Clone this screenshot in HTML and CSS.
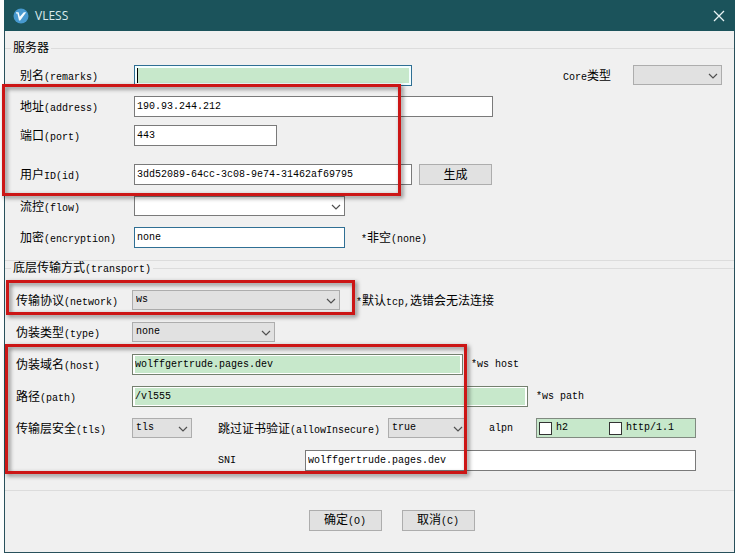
FILE: index.html
```html
<!DOCTYPE html>
<html lang="zh-CN">
<head>
<meta charset="utf-8">
<title>VLESS</title>
<link rel="stylesheet" href="styles.css">
</head>
<body>
<main class="window">
  <header class="titlebar">
    <svg class="logo" viewBox="0 0 16 16" aria-hidden="true">
      <circle cx="8" cy="8" r="7.500" fill="#4799cf"/>
      <path d="M3 4.200h2.600l1.200 4.500L10.800 4.200h2.400L7.200 12.500H6L4.400 5.600H3z" fill="#f4fbff"/>
    </svg>
    <h1 class="title">VLESS</h1>
    <button class="close" type="button" aria-label="关闭">
      <svg viewBox="0 0 12 12" aria-hidden="true"><path d="M1 1l10 10M11 1L1 11"/></svg>
    </button>
  </header>

  <form class="form">
    <fieldset class="group server">
      <legend>服务器</legend>
      <div class="row">
        <label class="name" for="remarks">别名<span class="en">(remarks)</span></label>
        <input class="box w-278 focused" id="remarks" type="text">
        <label class="core" for="core"><span class="en">Core</span>类型</label>
        <span class="pick w-89"><select id="core"><option></option></select><svg viewBox="0 0 10 6" aria-hidden="true"><path d="M1 1l4 4 4-4"/></svg></span>
      </div>
      <div class="row">
        <label class="name" for="address">地址<span class="en">(address)</span></label>
        <input class="box w-359" id="address" type="text" value="190.93.244.212">
      </div>
      <div class="row tight">
        <label class="name" for="port">端口<span class="en">(port)</span></label>
        <input class="box w-143" id="port" type="text" value="443">
      </div>
      <div class="row loose">
        <label class="name" for="uid">用户<span class="en">ID(id)</span></label>
        <input class="box w-278" id="uid" type="text" value="3dd52089-64cc-3c08-9e74-31462af69795">
        <button class="btn beside" type="button">生成</button>
      </div>
      <div class="row wide">
        <label class="name" for="flow">流控<span class="en">(flow)</span></label>
        <span class="pick white w-211"><select id="flow"><option></option></select><svg viewBox="0 0 10 6" aria-hidden="true"><path d="M1 1l4 4 4-4"/></svg></span>
      </div>
      <div class="row">
        <label class="name" for="encryption">加密<span class="en">(encryption)</span></label>
        <input class="box w-211 active" id="encryption" type="text" value="none">
        <span class="hint far"><span class="en">*</span>非空<span class="en">(none)</span></span>
      </div>
    </fieldset>

    <fieldset class="group transport">
      <legend>底层传输方式<span class="en">(transport)</span></legend>
      <div class="row">
        <label class="name" for="network">传输协议<span class="en">(network)</span></label>
        <span class="pick w-208"><select id="network"><option>ws</option></select><svg viewBox="0 0 10 6" aria-hidden="true"><path d="M1 1l4 4 4-4"/></svg></span>
        <span class="hint far"><span class="en">*</span>默认<span class="en">tcp,</span>选错会无法连接</span>
      </div>
      <div class="row">
        <label class="name" for="type">伪装类型<span class="en">(type)</span></label>
        <span class="pick w-143"><select id="type"><option>none</option></select><svg viewBox="0 0 10 6" aria-hidden="true"><path d="M1 1l4 4 4-4"/></svg></span>
      </div>
      <div class="row">
        <label class="name" for="host">伪装域名<span class="en">(host)</span></label>
        <input class="box green w-331" id="host" type="text" value="wolffgertrude.pages.dev">
        <span class="hint en">*ws host</span>
      </div>
      <div class="row">
        <label class="name" for="path">路径<span class="en">(path)</span></label>
        <input class="box green w-396" id="path" type="text" value="/vl555">
        <span class="hint en">*ws path</span>
      </div>
      <div class="row">
        <label class="name" for="tls">传输层安全<span class="en">(tls)</span></label>
        <span class="pick w-60"><select id="tls"><option>tls</option></select><svg viewBox="0 0 10 6" aria-hidden="true"><path d="M1 1l4 4 4-4"/></svg></span>
        <label class="insecure" for="insecure">跳过证书验证<span class="en">(allowInsecure)</span></label>
        <span class="pick w-79"><select id="insecure"><option>true</option></select><svg viewBox="0 0 10 6" aria-hidden="true"><path d="M1 1l4 4 4-4"/></svg></span>
        <span class="alpn en" id="alpn">alpn</span>
        <div class="checks" role="group" aria-labelledby="alpn">
          <label class="check en"><input type="checkbox">h2</label>
          <label class="check en"><input type="checkbox">http/1.1</label>
        </div>
      </div>
      <div class="row sni">
        <label class="sni-name en" for="sni">SNI</label>
        <input class="box w-391" id="sni" type="text" value="wolffgertrude.pages.dev">
      </div>
    </fieldset>

    <footer class="actions">
      <button class="btn" type="submit">确定<span class="en">(O)</span></button>
      <button class="btn" type="button">取消<span class="en">(C)</span></button>
    </footer>
  </form>

  <div class="mark mark-server"></div>
  <div class="mark mark-network"></div>
  <div class="mark mark-host"></div>
</main>
</body>
</html>
```
FILE: styles.css
```css
* {
  box-sizing: border-box;
}

body {
  margin: 0;
  background: #fcfdfd;
  color: #000;
  font: 12px/14px "Liberation Mono", "Noto Sans CJK SC", monospace;
}

input,
select,
button {
  margin: 0;
  border-radius: 0;
  color: #000;
  font: inherit;
}

/* Latin runs are half the width of a Chinese character */
.en,
.box,
.pick select {
  font-size: 10px;
}

.window {
  position: relative;
  display: flex;
  flex-direction: column;
  min-height: 100vh;
  margin-left: 4px;
  border: 1px solid #28505b;
  border-top: 0;
  background: #f0f0f0;
}

.titlebar {
  display: flex;
  align-items: center;
  height: 31px;
  margin: 0 -1px;
  padding: 0 10px 0 9px;
  background: #1b535b;
}

.logo {
  width: 16px;
  height: 16px;
}

.title {
  flex: 1;
  margin: 0 0 0 6px;
  color: #dcebed;
  font: 12px/16px "Open Sans", "Noto Sans", sans-serif;
}

.close {
  display: flex;
  padding: 0;
  border: 0;
  background: none;
}

.close svg {
  width: 12px;
  height: 12px;
  fill: none;
  stroke: #e8f3f4;
  stroke-width: 1.3;
}

.form {
  padding-top: 10px;
}

.group {
  min-width: 0;
  margin: 0;
  padding: 0 12px 12px;
  border: solid #dcdcdc;
  border-width: 1px 0;
}

.group legend {
  height: 14px;
  padding: 0 2px;
  line-height: 16px;
}

.server {
  padding-left: 15px;
}

.server legend {
  margin-left: -9px;
}

.transport {
  padding: 4px 12px 19px 11px;
}

.transport legend {
  margin-left: -5px;
}

.row {
  display: flex;
  align-items: center;
  height: 21px;
  margin-top: 10px;
  white-space: nowrap;
}

.tight {
  margin-top: 8px;
}

.loose {
  margin-top: 18px;
}

.wide,
.transport .row {
  margin-top: 11px;
}

.name {
  flex: none;
  width: 114px;
}

.name,
.core,
.insecure,
.far {
  padding-top: 3px;
}

.transport .name {
  width: 116px;
}

.box {
  height: 21px;
  padding: 1px 2px 2px;
  border: 1px solid #7a7a7a;
  outline: 0;
  background: #fff;
}

.active {
  border-color: #2f6f94;
}

/* Empty focused field: tinted text area with the caret at its start */
.focused {
  padding: 2px;
  border-color: #2f6f94;
  background:
    linear-gradient(#000, #000) left / 1px 100% no-repeat content-box,
    linear-gradient(#c7e8cb, #c7e8cb) content-box,
    #f4ffff;
}

.green {
  border-color: #74806f;
  background: linear-gradient(#c7e8cb, #c7e8cb) content-box, #fff;
  padding: 1px 2px;
}

.pick {
  position: relative;
  flex: none;
  align-self: flex-start;
  height: 20px;
}

.pick select {
  width: 100%;
  height: 100%;
  padding: 0 18px 0 3px;
  border: 1px solid #adadad;
  background: #e1e1e1;
  appearance: none;
}

.pick.white select {
  border-color: #7a7a7a;
  background: #fff;
}

.pick svg {
  position: absolute;
  top: 8px;
  right: 4px;
  width: 10px;
  height: 6px;
  fill: none;
  stroke: #505050;
  stroke-width: 1.2;
  pointer-events: none;
}

.w-60 { width: 60px; }
.w-79 { width: 79px; }
.w-89 { width: 89px; }
.w-143 { width: 143px; }
.w-208 { width: 208px; }
.w-211 { width: 211px; }
.w-278 { width: 278px; }
.w-331 { width: 331px; }
.w-359 { width: 359px; }
.w-391 { width: 391px; }
.w-396 { width: 396px; }

.core {
  margin: 0 22px 0 auto;
}

.hint {
  margin-left: 8px;
}

.far {
  margin-left: 16px;
}

.insecure {
  width: 170px;
  margin-left: 26px;
}

.alpn {
  width: 47px;
  margin-left: 22px;
}

.checks {
  display: grid;
  grid-template-columns: 70px 1fr;
  align-items: center;
  align-self: flex-start;
  width: 160px;
  height: 20px;
  padding-left: 2px;
  border: 1px solid #808a80;
  background: #c7e8cb;
}

.check {
  display: flex;
  align-items: center;
  gap: 4px;
}

.check input {
  width: 13px;
  height: 13px;
  border: 1px solid #333;
  background: #fff;
  appearance: none;
}

.sni {
  padding-left: 202px;
}

.sni-name {
  width: 87px;
}

.btn {
  width: 73px;
  height: 21px;
  padding: 2px 0 0;
  border: 1px solid #adadad;
  background: #e1e1e1;
}

.beside {
  margin-left: 7px;
}

.actions {
  display: flex;
  justify-content: center;
  gap: 20px;
  padding: 19px 0 20px 44px;
}

/* Highlight frames laid over the form */
.mark {
  position: absolute;
  border: 3px solid #cc1616;
  filter: drop-shadow(2px 2px 2px rgba(0, 0, 0, 0.5));
  pointer-events: none;
}

.mark-server {
  top: 84px;
  left: -3px;
  width: 399px;
  height: 112px;
}

.mark-network {
  top: 280px;
  left: 1px;
  width: 349px;
  height: 35px;
}

.mark-host {
  top: 344px;
  left: 0;
  width: 462px;
  height: 130px;
}
```
